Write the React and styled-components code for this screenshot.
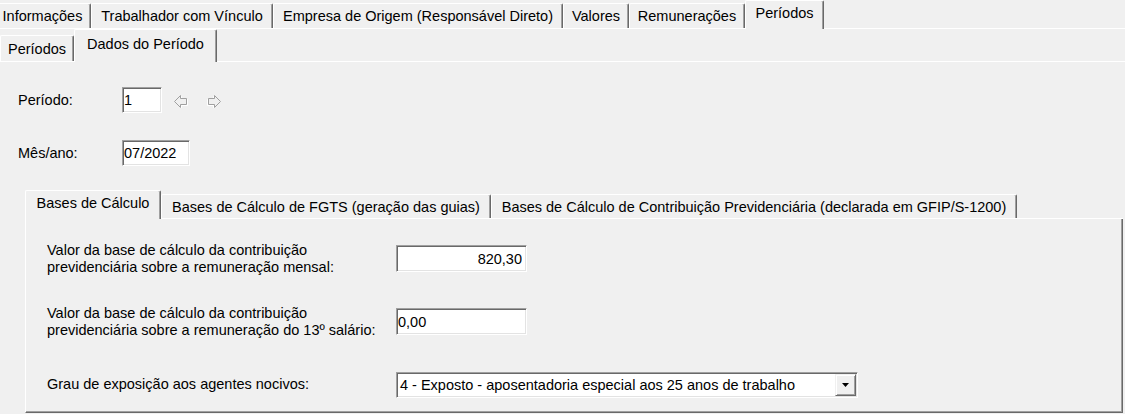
import React from "react";
import styled, { createGlobalStyle } from "styled-components";

const GlobalStyle = createGlobalStyle`
  body {
    margin: 0;
    background: #f0f0f0;
    font-family: "Liberation Sans", Arial, sans-serif;
    font-size: 14.5px;
    color: #000;
  }
`;

const topTabs = [
  { label: "Informações", w: 97, first: true },
  { label: "Trabalhador com Vínculo", w: 182 },
  { label: "Empresa de Origem (Responsável Direto)", w: 290 },
  { label: "Valores", w: 66 },
  { label: "Remunerações", w: 116 },
  { label: "Períodos", w: 79, active: true },
];

const subTabs = [
  { label: "Períodos", w: 74 },
  { label: "Dados do Período", w: 143, active: true },
];

const innerTabs = [
  { label: "Bases de Cálculo", w: 136, active: true },
  { label: "Bases de Cálculo de FGTS (geração das guias)", w: 330 },
  {
    label: "Bases de Cálculo de Contribuição Previdenciária (declarada em GFIP/S-1200)",
    w: 526,
  },
];

const App = () => {
  return (
    <Page>
      <GlobalStyle />
      <TabRow $h={28} $tab={25}>
        {topTabs.map((t) => (
          <Tab key={t.label} $w={t.w} $active={t.active} $first={t.first}>
            {t.label}
          </Tab>
        ))}
      </TabRow>
      <TabRow $h={32} $tab={26}>
        {subTabs.map((t) => (
          <Tab key={t.label} $w={t.w} $active={t.active}>
            {t.label}
          </Tab>
        ))}
      </TabRow>

      <Body>
        <FieldRow $gap={27}>
          <FieldLabel>Período:</FieldLabel>
          <TextBox $w={40} defaultValue="1" readOnly />
          <NavArrows>
            <ArrowIcon />
            <ArrowIcon $flip />
          </NavArrows>
        </FieldRow>
        <FieldRow>
          <FieldLabel>Mês/ano:</FieldLabel>
          <TextBox $w={68} defaultValue="07/2022" readOnly />
        </FieldRow>

        <InnerTabs>
          <TabRow $h={28} $tab={24}>
            {innerTabs.map((t) => (
              <Tab key={t.label} $w={t.w} $active={t.active}>
                {t.label}
              </Tab>
            ))}
          </TabRow>
          <Panel>
            <PanelLabel>
              Valor da base de cálculo da contribuição
              <br />
              previdenciária sobre a remuneração mensal:
            </PanelLabel>
            <TextBox $w={131} $h={27} $right defaultValue="820,30" readOnly />

            <PanelLabel>
              Valor da base de cálculo da contribuição
              <br />
              previdenciária sobre a remuneração do 13º salário:
            </PanelLabel>
            <TextBox $w={131} $h={27} defaultValue="0,00" readOnly />

            <PanelLabel>Grau de exposição aos agentes nocivos:</PanelLabel>
            <SelectBox>
              <SelectValue>
                4 - Exposto - aposentadoria especial aos 25 anos de trabalho
              </SelectValue>
              <DropButton>
                <svg width="7" height="4" viewBox="0 0 7 4">
                  <path d="M0 0H7L3.5 4Z" fill="#000" />
                </svg>
              </DropButton>
            </SelectBox>
          </Panel>
        </InnerTabs>
      </Body>
    </Page>
  );
};

const ArrowIcon = ({ $flip }) => (
  <svg
    width="15"
    height="13"
    viewBox="0 0 15 13"
    style={$flip ? { transform: "scaleX(-1)" } : undefined}
  >
    <path
      d="M2.5 7.5 L8.5 1.5 V4.5 H14.5 V10.5 H8.5 V13.5 Z"
      fill="none"
      stroke="#fff"
    />
    <path
      d="M1.5 6.5 L7.5 0.5 V3.5 H13.5 V9.5 H7.5 V12.5 Z"
      fill="#f0f0f0"
      stroke="#a0a0a0"
    />
  </svg>
);

const Page = styled.div`
  width: 1125px;
  height: 414px;
  overflow: hidden;
  background: #f0f0f0;
`;

const TabRow = styled.div`
  --tab-h: ${(p) => p.$tab}px;
  --row-h: ${(p) => p.$h + 1}px;
  display: flex;
  align-items: flex-end;
  height: ${(p) => p.$h}px;
  border-bottom: 1px solid #fff;
`;

const Tab = styled.div`
  box-sizing: border-box;
  flex: none;
  display: flex;
  align-items: center;
  justify-content: center;
  white-space: nowrap;
  width: ${(p) => p.$w}px;
  height: ${(p) => (p.$active ? "var(--row-h)" : "var(--tab-h)")};
  padding-bottom: ${(p) => (p.$active ? 4 : 0)}px;
  margin-left: ${(p) => (p.$first ? -6 : 0)}px;
  margin-bottom: ${(p) => (p.$active ? -1 : 0)}px;
  position: relative;
  z-index: ${(p) => (p.$active ? 1 : 0)};
  background: #f0f0f0;
  border-top: 1px solid #fff;
  border-left: 1px solid #fff;
  border-right: 1px solid #696969;
  border-radius: 2px 2px 0 0;
  box-shadow: inset -1px 0 #a0a0a0;
`;

const Body = styled.div`
  padding-top: 25px;
`;

const FieldRow = styled.div`
  display: flex;
  align-items: center;
  height: 26px;
  margin: 0 0 ${(p) => p.$gap || 0}px 18px;
`;

const FieldLabel = styled.span`
  width: 104px;
`;

const TextBox = styled.input`
  box-sizing: border-box;
  width: ${(p) => p.$w}px;
  height: ${(p) => p.$h || 26}px;
  margin: 0;
  padding: 0 ${(p) => (p.$right ? 4 : 1)}px 0 1px;
  font: inherit;
  color: #000;
  text-align: ${(p) => (p.$right ? "right" : "left")};
  background: #fff;
  border: 1px solid;
  border-color: #a0a0a0 #fff #fff #a0a0a0;
  box-shadow: inset 1px 1px #696969, inset -1px -1px #e3e3e3;
  outline: none;
`;

const NavArrows = styled.div`
  display: flex;
  gap: 19px;
  margin-left: 11px;
  margin-top: 2px;
`;

const InnerTabs = styled.div`
  width: 1098px;
  margin: 24px 0 0 25px;
`;

const Panel = styled.div`
  box-sizing: border-box;
  height: 194px;
  display: grid;
  grid-template-columns: 349px auto;
  grid-auto-rows: 63px;
  align-items: center;
  justify-items: start;
  padding: 8px 0 0 21px;
  border-left: 1px solid #fff;
  border-right: 1px solid #696969;
  border-bottom: 1px solid #696969;
  box-shadow: inset -1px -1px #a0a0a0;
`;

const PanelLabel = styled.div`
  line-height: 17px;
`;

const SelectBox = styled.div`
  box-sizing: border-box;
  width: 462px;
  height: 26px;
  display: flex;
  align-items: stretch;
  background: #fff;
  border: 1px solid;
  border-color: #a0a0a0 #fff #fff #a0a0a0;
  box-shadow: inset 1px 1px #696969, inset -1px -1px #e3e3e3;
  padding: 1px;
`;

const SelectValue = styled.div`
  flex: 1;
  display: flex;
  align-items: center;
  padding-left: 2px;
  white-space: nowrap;
`;

const DropButton = styled.div`
  box-sizing: border-box;
  width: 21px;
  display: flex;
  align-items: center;
  justify-content: center;
  background: #f0f0f0;
  border: 1px solid;
  border-color: #f0f0f0 #696969 #696969 #f0f0f0;
  box-shadow: inset 1px 1px #fff, inset -1px -1px #a0a0a0;
`;

export default App;
